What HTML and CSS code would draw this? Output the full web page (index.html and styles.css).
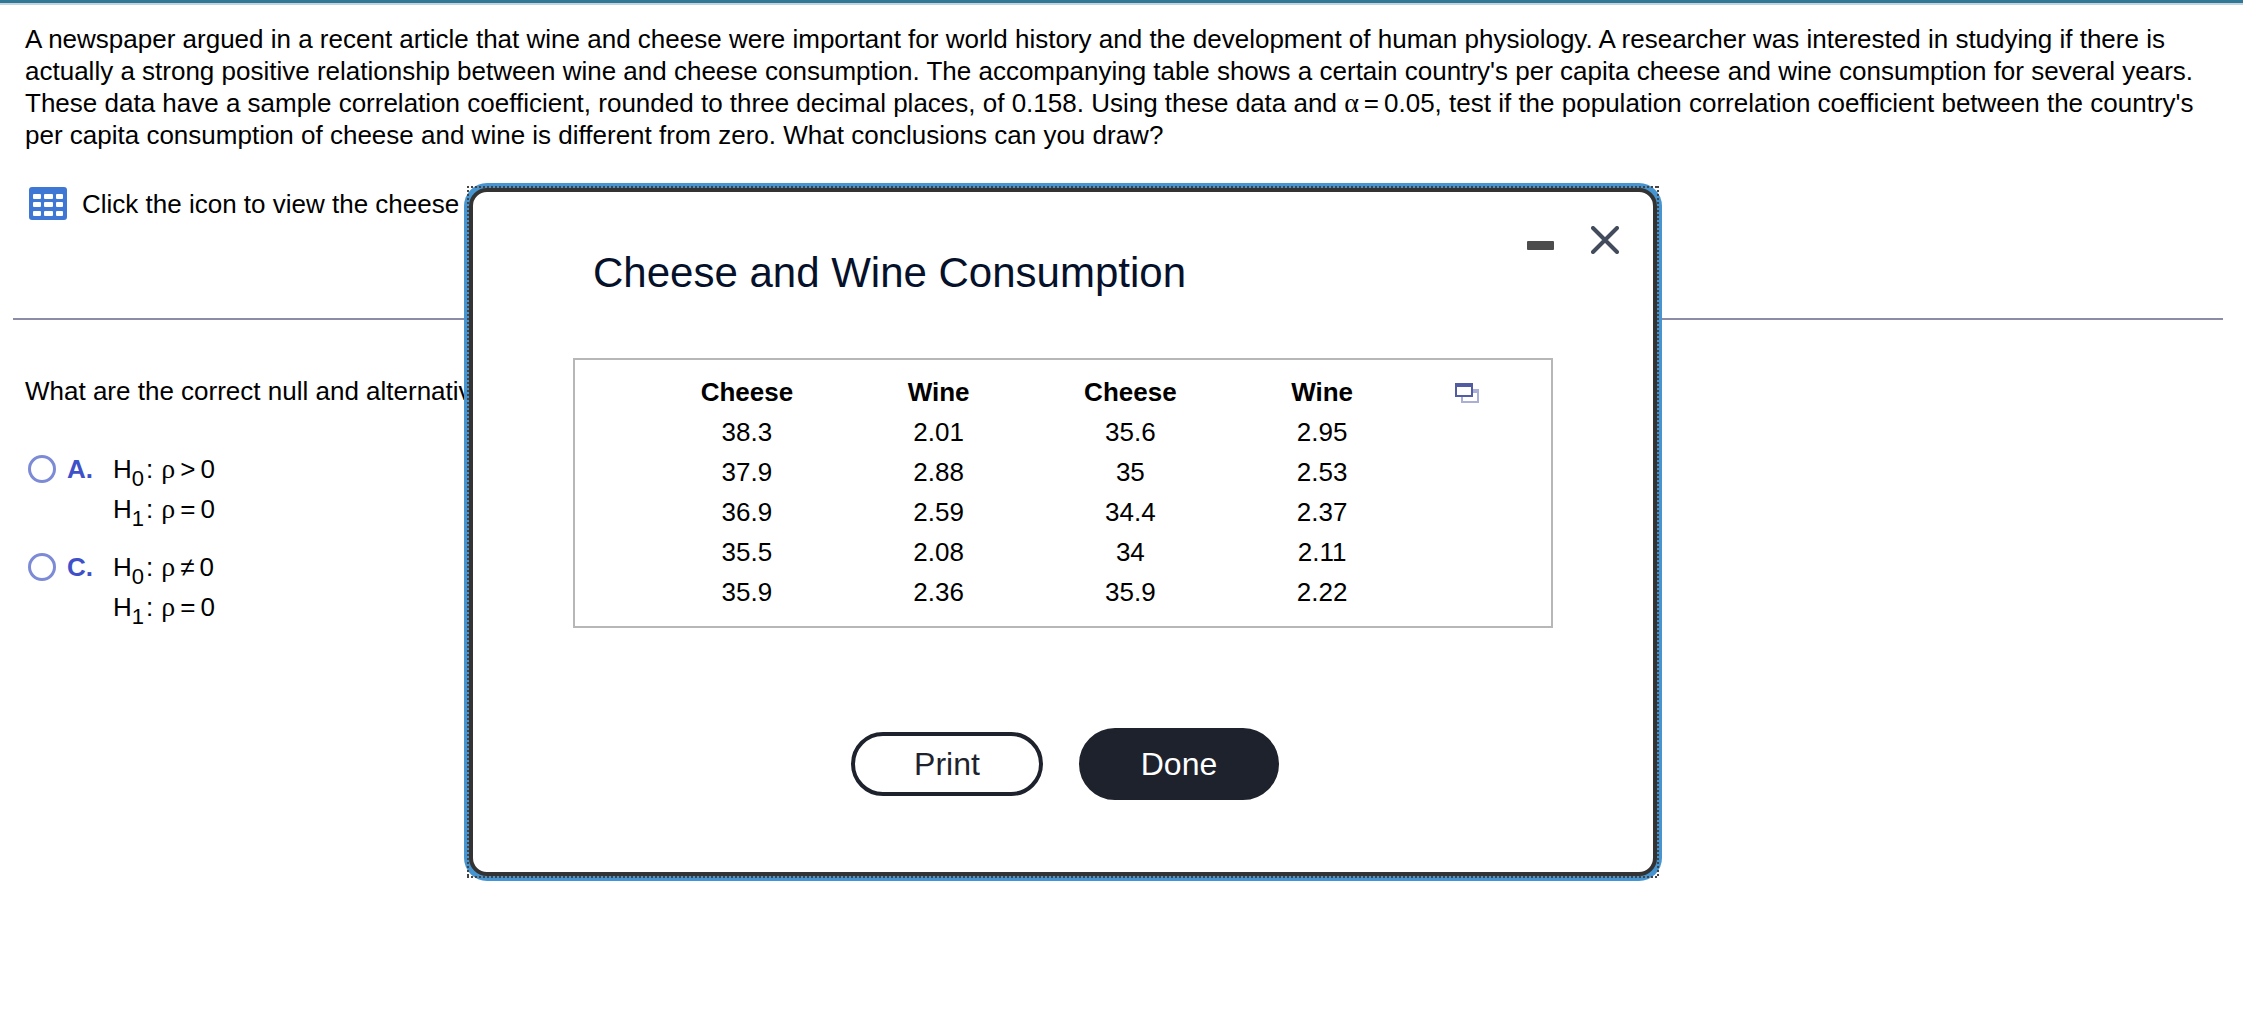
FILE: index.html
```html
<!DOCTYPE html>
<html lang="en">
<head>
<meta charset="utf-8">
<title>Cheese and Wine Consumption</title>
<link rel="stylesheet" href="styles.css">
</head>
<body>
<main class="page">
  <section class="intro">
    <p class="problem">A newspaper argued in a recent article that wine and cheese were important for world history and the development of human physiology. A researcher was interested in studying if there is actually a strong positive relationship between wine and cheese consumption. The accompanying table shows a certain country's per capita cheese and wine consumption for several years. These data have a sample correlation coefficient, rounded to three decimal places, of 0.158. Using these data and <span class="math"><span class="greek">α</span><span class="op">=</span>0.05</span>, test if the population correlation coefficient between the country's per capita consumption of cheese and wine is different from zero. What conclusions can you draw?</p>
    <div class="data-link">
      <button class="icon-button" type="button" aria-label="View data">
        <svg width="38" height="33" viewBox="0 0 38 33" aria-hidden="true">
          <rect width="38" height="33" rx="3" fill="#3f78d4"/>
          <g fill="#fff">
            <rect x="4" y="7" width="8" height="5" rx="1"/><rect x="15" y="7" width="9" height="5" rx="1"/><rect x="27" y="7" width="7" height="5" rx="1"/>
            <rect x="4" y="15" width="8" height="5" rx="1"/><rect x="15" y="15" width="9" height="5" rx="1"/><rect x="27" y="15" width="7" height="5" rx="1"/>
            <rect x="4" y="24" width="8" height="5" rx="1"/><rect x="15" y="24" width="9" height="5" rx="1"/><rect x="27" y="24" width="7" height="5" rx="1"/>
          </g>
        </svg>
      </button>
      <span>Click the icon to view the cheese</span>
    </div>
  </section>
  <hr class="divider">
  <section class="question">
    <p class="prompt">What are the correct null and alternative</p>
    <div class="choices">
      <div class="choice">
        <input class="radio" type="radio" name="hypotheses" id="choice-a">
        <label class="choice-label" for="choice-a">
          <span class="letter">A.</span>
          <span class="hypotheses">
            <span class="math">H<sub>0</sub>:<span class="greek rho">ρ</span><span class="op">&gt;</span>0</span>
            <span class="math">H<sub>1</sub>:<span class="greek rho">ρ</span><span class="op">=</span>0</span>
          </span>
        </label>
      </div>
      <div class="choice">
        <input class="radio" type="radio" name="hypotheses" id="choice-c">
        <label class="choice-label" for="choice-c">
          <span class="letter">C.</span>
          <span class="hypotheses">
            <span class="math">H<sub>0</sub>:<span class="greek rho">ρ</span><span class="op">≠</span>0</span>
            <span class="math">H<sub>1</sub>:<span class="greek rho">ρ</span><span class="op">=</span>0</span>
          </span>
        </label>
      </div>
    </div>
  </section>

  <div class="dialog" role="dialog" aria-labelledby="dialog-title">
    <div class="window-controls">
      <button class="icon-button" type="button" aria-label="Minimize">
        <svg width="28" height="28" viewBox="0 0 28 28" aria-hidden="true"><rect y="15" width="27" height="9" rx="1" fill="#4d4d4d"/></svg>
      </button>
      <button class="icon-button" type="button" aria-label="Close">
        <svg width="28" height="28" viewBox="0 0 28 28" aria-hidden="true"><path d="M2 2L26 26M26 2L2 26" stroke="#424c5c" stroke-width="4" stroke-linecap="round"/></svg>
      </button>
    </div>
    <h2 class="dialog-title" id="dialog-title">Cheese and Wine Consumption</h2>
    <div class="table-box">
      <table class="data">
        <thead><tr><th>Cheese</th><th>Wine</th><th>Cheese</th><th>Wine</th></tr></thead>
        <tbody>
          <tr><td>38.3</td><td>2.01</td><td>35.6</td><td>2.95</td></tr>
          <tr><td>37.9</td><td>2.88</td><td>35</td><td>2.53</td></tr>
          <tr><td>36.9</td><td>2.59</td><td>34.4</td><td>2.37</td></tr>
          <tr><td>35.5</td><td>2.08</td><td>34</td><td>2.11</td></tr>
          <tr><td>35.9</td><td>2.36</td><td>35.9</td><td>2.22</td></tr>
        </tbody>
      </table>
      <button class="icon-button copy" type="button" aria-label="Copy data">
        <svg width="24" height="20" viewBox="0 0 24 20" aria-hidden="true">
          <path d="M6 6h18v14H6zM8 10v8h14v-8z" fill="#abafd6" fill-rule="evenodd"/>
          <path d="M0 0h18v14H0z" fill="#515ca3"/><path d="M2 4h14v8H2z" fill="#fff"/>
        </svg>
      </button>
    </div>
    <div class="actions">
      <button class="pill print" type="button">Print</button>
      <button class="pill done" type="button">Done</button>
    </div>
  </div>
</main>
</body>
</html>
```
FILE: styles.css
```css
* { box-sizing: border-box; }

body {
  margin: 0;
  background: #fff;
  color: #000;
  font: 26px/32px "Liberation Sans", Arial, sans-serif;
}

p, h2 { margin: 0; }

.page {
  position: relative;
  border-top: 3px solid #317796;
  box-shadow: inset 0 2px #c5d3e0;
  padding: 20px 20px 20px 13px;
  min-height: 100vh;
}

.intro, .question { padding: 0 12px; }

.icon-button {
  display: block;
  flex: none;
  padding: 0;
  border: 0;
  background: none;
  cursor: pointer;
}
.icon-button svg { display: block; }

.data-link {
  display: flex;
  align-items: center;
  gap: 15px;
  margin-top: 36px;
  padding-left: 4px;
}

.divider {
  height: 2px;
  margin: 98px 0 55px;
  border: 0;
  background: #8c8ca6;
}

/* Formulas */
.math { white-space: nowrap; }
.greek { font-family: "Liberation Serif", "Times New Roman", serif; font-size: 28px; line-height: 0; }
.rho { margin-left: 8px; }
.op { margin: 0 5px; }
sub { font-size: 22px; line-height: 0; vertical-align: -8px; margin-right: 2px; }

.choices {
  display: flex;
  flex-direction: column;
  gap: 18px;
  margin-top: 42px;
}
.choice { display: flex; align-items: flex-start; gap: 11px; padding-left: 3px; }
.radio {
  appearance: none;
  flex: none;
  width: 28px;
  height: 28px;
  margin: 6px 0 0;
  border: 3px solid #7d8bd6;
  border-radius: 50%;
}
.choice-label { display: flex; line-height: 40px; }
.letter { width: 46px; color: #3f51c9; font-weight: bold; }
.hypotheses { display: flex; flex-direction: column; }
.hypotheses .math { height: 40px; }

/* Floating data window */
.dialog {
  position: absolute;
  top: 185px;
  left: 469px;
  width: 1188px;
  padding: 34px 100px 72px;
  border: 4px solid #333;
  border-radius: 18px;
  background: #fff;
  box-shadow: 0 0 0 5px #4695d1;
}
.dialog::before {
  content: "";
  position: absolute;
  inset: -6px;
  pointer-events: none;
  background:
    repeating-linear-gradient(90deg, #444 0 2px, transparent 2px 4px) top / 100% 2px no-repeat,
    repeating-linear-gradient(90deg, #444 0 2px, transparent 2px 4px) bottom / 100% 2px no-repeat,
    repeating-linear-gradient(#444 0 2px, transparent 2px 4px) left / 2px 100% no-repeat,
    repeating-linear-gradient(#444 0 2px, transparent 2px 4px) right / 2px 100% no-repeat;
}

.window-controls {
  display: flex;
  justify-content: flex-end;
  gap: 36px;
  margin-right: -66px;
}

.dialog-title {
  padding-left: 20px;
  color: #05112a;
  font-size: 42px;
  font-weight: normal;
  line-height: 38px;
}

.table-box {
  display: flex;
  align-items: flex-start;
  gap: 56px;
  margin-top: 66px;
  padding: 11px 72px 14px 57px;
  border: 2px solid #b7b7b7;
}
.data { flex: 1; table-layout: fixed; border-collapse: collapse; text-align: center; }
.data th, .data td { height: 40px; padding: 0; }
.data th { height: 41px; }
.copy { margin-top: 12px; }

.actions {
  display: flex;
  justify-content: center;
  align-items: center;
  gap: 36px;
  margin-top: 100px;
  padding-left: 4px;
}
.pill {
  border: 4px solid #1e222d;
  border-radius: 36px;
  font: inherit;
  font-size: 32px;
  line-height: 40px;
  cursor: pointer;
}
.print { width: 192px; height: 64px; background: #fff; color: #1e222d; }
.done { width: 200px; height: 72px; background: #1e222d; color: #fff; }
```
